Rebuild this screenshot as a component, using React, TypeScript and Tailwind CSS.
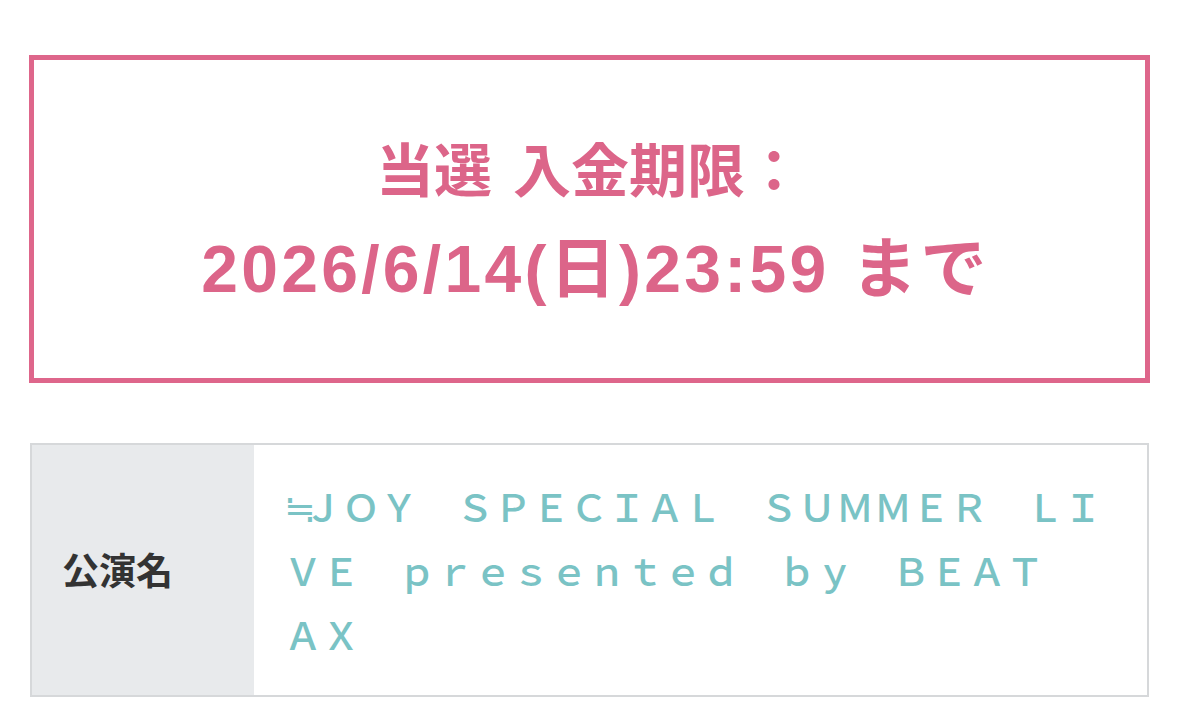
export default function App() {
  return (
    <div className="min-h-screen w-full bg-white px-[29px] pt-[55px] font-['Liberation_Sans','Noto_Sans_CJK_JP',sans-serif]">
      {/* 入金期限 */}
      <div className="flex h-[328px] flex-col items-center justify-center gap-[29px] border-[5px] border-[#de668b] text-[#dc6589]">
        <p className="font-['Noto_Sans_CJK_JP',sans-serif] text-[58px] font-bold leading-[70px] [word-spacing:8px]">当選 入金期限：</p>
        <p className="pl-3 text-[66px] font-bold leading-[76px] tracking-[0.05em]">2026/6/14(日)23:59 まで</p>
      </div>

      {/* 公演情報 */}
      <div className="mx-px mt-[60px] flex h-[254px] border-2 border-[#d6d8da]">
        <div className="flex w-[222px] shrink-0 items-center bg-[#e8eaec] pl-[30px]">
          <span className="font-['Noto_Sans_CJK_JP',sans-serif] text-[37px] font-bold text-[#333333]">公演名</span>
        </div>
        <div className="flex flex-1 flex-col justify-center bg-white pl-[30px] font-['Noto_Sans_CJK_JP',sans-serif] text-[38px] font-medium leading-[64px] text-[#7ac3c5]">
          <span>
            <span className="tracking-[-12px]">≒</span>ＪＯＹ　ＳＰＥＣＩＡＬ　ＳＵＭＭＥＲ　ＬＩ
          </span>
          <span>ＶＥ　ｐｒｅｓｅｎｔｅｄ　ｂｙ　ＢＥＡＴ</span>
          <span>ＡＸ</span>
        </div>
      </div>
    </div>
  );
}
